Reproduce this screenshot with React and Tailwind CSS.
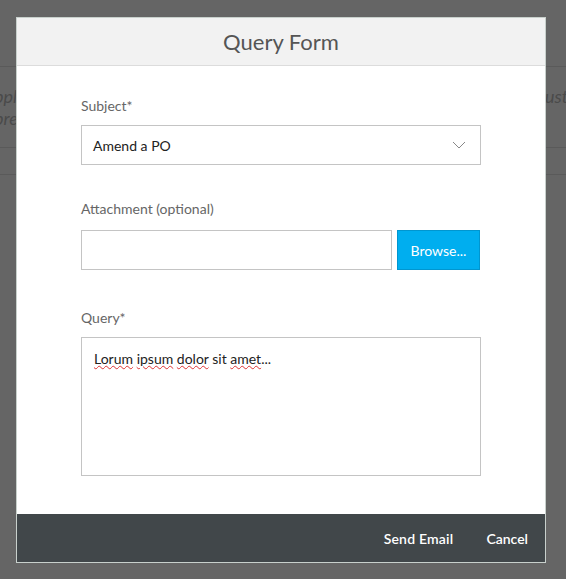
export default function App() {
  return (
    <div className="relative w-[566px] h-[579px] bg-[#656565] overflow-hidden" style={{ fontFamily: "Lato, 'Open Sans', sans-serif" }}>
      <div className="flex flex-col">
        <div className="h-[67px] border-b border-[#5a5a5a]" />
        <div className="h-[81px] border-b border-[#5a5a5a] flex items-center justify-between italic text-[18px] text-[#4a4a4a] leading-[22px]">
          <div className="-ml-[6px]">ppl<br />pre</div>
          <div className="-mr-[6px]">usti<br />&nbsp;</div>
        </div>
        <div className="h-[27px] border-b border-[#5a5a5a]" />
      </div>
      <div className="absolute left-[16px] top-[17px] w-[530px] h-[546px] bg-white border border-[#c8d0cc] flex flex-col">
        <div className="h-[48px] bg-[#f2f2f2] border-b border-[#dcdcdc] flex items-center justify-center text-[22px] text-[#555]">Query Form</div>
        <div className="flex-1 px-[64px] pt-[31px] flex flex-col text-[14px]">
          <div className="text-[#666] mb-[10px] leading-[18px]">Subject*</div>
          <div className="h-[40px] border border-[#c4c4c4] flex items-center justify-between pl-[11px] pr-[14px] text-[#222]">
            <span>Amend a PO</span>
            <svg width="14" height="8" viewBox="0 0 14 8" fill="none" stroke="#888" strokeWidth="1"><path d="M1 1l6 6 6-6" /></svg>
          </div>
          <div className="text-[#666] mt-[35px] mb-[12px] leading-[18px]">Attachment (optional)</div>
          <div className="flex gap-[5px] h-[40px] pr-[1px]">
            <div className="flex-1 border border-[#c4c4c4]" />
            <button className="w-[83px] bg-[#00aeef] border border-[#0096d0] text-white text-[14px]">Browse...</button>
          </div>
          <div className="text-[#666] mt-[39px] mb-[10px] leading-[18px]">Query*</div>
          <div className="h-[139px] border border-[#c4c4c4] px-[12px] pt-[10px] text-[#222]">
            <span className="underline decoration-wavy decoration-[#d33] decoration-1">Lorum</span>{" "}
            <span className="underline decoration-wavy decoration-[#d33] decoration-1">ipsum</span>{" "}
            <span className="underline decoration-wavy decoration-[#d33] decoration-1">dolor</span> sit{" "}
            <span className="underline decoration-wavy decoration-[#d33] decoration-1">amet</span>...
          </div>
        </div>
        <div className="h-[48px] bg-[#41474a] flex items-center justify-end gap-[33px] pr-[17px] text-white text-[14px] font-semibold">
          <span className="tracking-[0.2px]">Send Email</span>
          <span>Cancel</span>
        </div>
      </div>
    </div>
  );
}
